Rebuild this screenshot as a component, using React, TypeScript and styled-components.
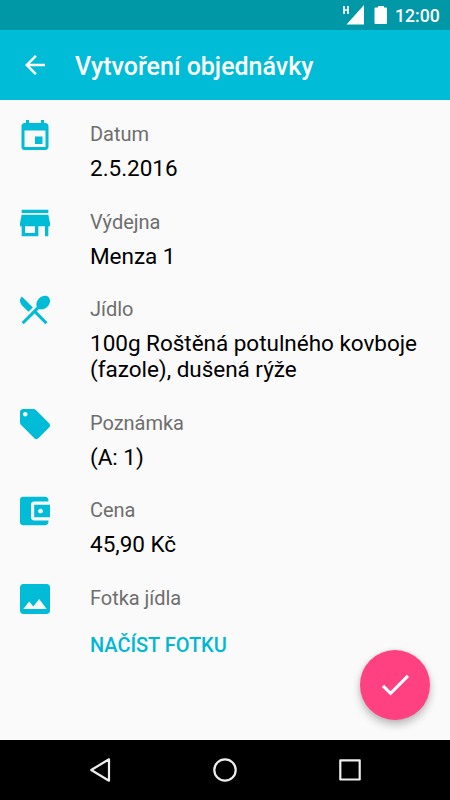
import React from 'react';
import styled, { createGlobalStyle } from 'styled-components';
import { MdArrowBack, MdEvent, MdStore, MdRestaurantMenu, MdLocalOffer, MdAccountBalanceWallet, MdImage, MdCheck } from 'react-icons/md';

const Global = createGlobalStyle`
  * { box-sizing: border-box; }
  body { margin: 0; font-family: Roboto, sans-serif; }
`;
const Screen = styled.div`
  position: relative; width: 450px; height: 800px; display: flex; flex-direction: column; background: #fafafa; overflow: hidden;
`;
const StatusBar = styled.div`
  height: 30px; background: #0097a7; display: flex; align-items: center; justify-content: flex-end; padding-right: 10px; color: #fff;
`;
const StatusIcons = styled.svg` flex: none; width: 50px; height: 30px; margin-right: 5px; `;
const Clock = styled.span` width: 45px; font-size: 17.6px; font-weight: 500; line-height: 30px; padding-top: 1px; white-space: nowrap; `;
const Toolbar = styled.header`
  height: 70px; background: #00bcd7; color: #fff; display: flex; align-items: center; padding-left: 20px;
  svg { width: 30px; height: 30px; }
`;
const Title = styled.h1` margin: 3px 0 0 25px; font-size: 25px; font-weight: 500; line-height: 30px; `;
const List = styled.main` flex: 1; padding-top: 20px; `;
const Row = styled.section<{ $h: number }>`
  height: ${p => p.$h}px; display: flex; padding-left: 20px;
  > svg { width: 30px; height: 30px; color: #00bcd7; flex: none; }
`;
const Body = styled.div` margin-left: 40px; `;
const Label = styled.div` font-size: 20px; line-height: 24px; margin-top: 2px; letter-spacing: -0.03px; color: #6e6e6e; `;
const Value = styled.div` font-size: 22.5px; line-height: 26px; margin-top: 9px; letter-spacing: -0.02px; color: #000; white-space: pre-line; `;
const Action = styled.button`
  display: block; border: 0; padding: 0; background: none; margin-top: 23px; letter-spacing: -0.04px; color: #00b8d4; font: 500 20px/24px Roboto, sans-serif;
`;
const Fab = styled.button`
  position: absolute; left: 360px; top: 650px; width: 70px; height: 70px; border: 0; border-radius: 50%; padding: 0;
  background: #ff4081; color: #fff; display: grid; place-items: center; box-shadow: 0 5px 8px rgba(0,0,0,.24), 0 0 4px rgba(0,0,0,.1);
  svg { width: 37px; height: 37px; }
`;
const NavBar = styled.nav`
  height: 60px; background: #000; svg { display: block; width: 450px; height: 60px; }
`;

const items = [
  { label: 'Datum', value: '2.5.2016', Icon: MdEvent, box: '2 1 20 20', h: 87.5 },
  { label: 'Výdejna', value: 'Menza 1', Icon: MdStore, box: '3 3 18 18', h: 87.5 },
  { label: 'Jídlo', value: '100g Roštěná potulného kovboje\n(fazole), dušená rýže', Icon: MdRestaurantMenu, box: '2.74 2.6 19.1 19.1', h: 113.5 },
  { label: 'Poznámka', value: '(A: 1)', Icon: MdLocalOffer, box: '2 2 20 20', h: 87.5 },
  { label: 'Cena', value: '45,90 Kč', Icon: MdAccountBalanceWallet, box: '3 2.5 19 19', h: 87.5 },
  { label: 'Fotka jídla', value: '', Icon: MdImage, box: '3 3 18 18', h: 90 },
];

export default function App() {
  return (
    <Screen>
      <Global />
      <StatusBar>
        <StatusIcons viewBox="0 0 50 30" fill="#fff">
          <path d="M4 6v8M8 6v8M4 10h4" stroke="#fff" strokeWidth="1.7" />
          <path d="M24 5v19.5H6.5z" />
          <path d="M35.5 7.5H38V6h6v1.5h2a1 1 0 0 1 1 1V23a1 1 0 0 1-1 1H35.5a1 1 0 0 1-1-1V8.5a1 1 0 0 1 1-1z" />
        </StatusIcons>
        <Clock>12:00</Clock>
      </StatusBar>
      <Toolbar><MdArrowBack /><Title>Vytvoření objednávky</Title></Toolbar>
      <List>
        {items.map(({ label, value, Icon, box, h }) => (
          <Row key={label} $h={h}>
            <Icon viewBox={box} />
            <Body>
              <Label>{label}</Label>
              {value ? <Value>{value}</Value> : <Action>NAČÍST FOTKU</Action>}
            </Body>
          </Row>
        ))}
      </List>
      <Fab aria-label="Potvrdit"><MdCheck viewBox="0.2 0.5 24 24" /></Fab>
      <NavBar>
        <svg viewBox="0 0 450 60" fill="none" stroke="#eee" strokeWidth="2.2" strokeLinejoin="round">
          <path d="M109 19.3v21.4L91.2 30z" /><circle cx="225" cy="30" r="10.7" /><rect x="340.3" y="20.3" width="19.4" height="19.2" />
        </svg>
      </NavBar>
    </Screen>
  );
}
